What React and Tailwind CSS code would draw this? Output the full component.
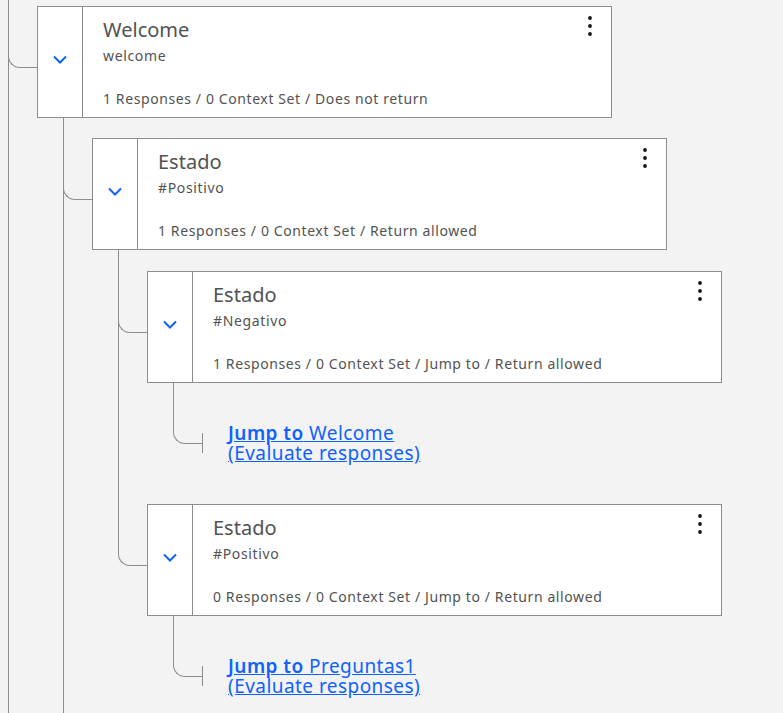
import React from 'react';

// ── Small drawings ─────────────────────────────────────────────────────────
function Chevron() {
  return (
    <svg width="14" height="9" viewBox="0 0 14 9">
      <path d="M1 1.5 L7 7.5 L13 1.5" stroke="#0f62fe" strokeWidth="2" fill="none" />
    </svg>
  );
}

function Kebab() {
  return (
    <svg width="4" height="20" viewBox="0 0 4 20">
      <circle cx="2" cy="2" r="1.9" fill="#161616" />
      <circle cx="2" cy="10" r="1.9" fill="#161616" />
      <circle cx="2" cy="18" r="1.9" fill="#161616" />
    </svg>
  );
}

// ── Dialog node card ───────────────────────────────────────────────────────
function NodeCard({ title, condition, summary }) {
  return (
    <div className="flex w-[575px] h-[112px] shrink-0 border border-[#8d8d8d] bg-white">
      <div className="w-[45px] shrink-0 border-r border-[#8d8d8d] flex items-center justify-center pb-[5px]">
        <Chevron />
      </div>
      <div className="flex-1 flex flex-col pl-[20px] pt-[10px] text-[#525252]">
        <div className="text-[20px] leading-[26px]">{title}</div>
        <div className="mt-[3px] text-[14px] leading-[20px] tracking-[0.65px]">{condition}</div>
        <div className="mt-auto mb-[8px] text-[14px] leading-[20px] tracking-[0.6px]">{summary}</div>
      </div>
      <div className="pt-[9px] pr-[19px]">
        <Kebab />
      </div>
    </div>
  );
}

// One branch of the tree: connector column + content
function Branch({ last, curve, top, children }) {
  return (
    <div className="flex">
      <div className={`w-[29px] shrink-0 ${last ? '' : 'border-l border-[#8d8d8d]'}`}>
        <div className={`${last ? '' : '-ml-px'} ${curve} border-l border-b border-[#8d8d8d] rounded-bl-[12px]`} />
      </div>
      <div className={`flex flex-col ${top}`}>{children}</div>
    </div>
  );
}

function JumpTo({ target }) {
  return (
    <div className="flex items-center">
      <div className="h-[20px] border-l border-[#8d8d8d]" />
      <a href="#" className="ml-[25px] text-[19px] leading-[20px] tracking-[0.45px] text-[#0f62fe] underline">
        <span className="font-semibold">Jump to</span> {target}
        <br />
        (Evaluate responses)
      </a>
    </div>
  );
}

export default function App() {
  return (
    <div className="h-[713px] overflow-hidden bg-[#f3f3f3] pl-[8px] font-['Noto_Sans',sans-serif]">
      <Branch curve="h-[68px]" top="pt-[6px]">
        <NodeCard
          title="Welcome"
          condition="welcome"
          summary="1 Responses / 0 Context Set / Does not return"
        />
        <div className="pl-[26px]">
          <Branch curve="h-[82px]" top="pt-[20px]">
            <NodeCard
              title="Estado"
              condition="#Positivo"
              summary="1 Responses / 0 Context Set / Return allowed"
            />
            <div className="pl-[26px]">
              <Branch curve="h-[83px]" top="pt-[21px]">
                <NodeCard
                  title="Estado"
                  condition="#Negativo"
                  summary="1 Responses / 0 Context Set / Jump to / Return allowed"
                />
                <div className="pl-[26px]">
                  <Branch last curve="h-[61px]" top="pt-[40px] pb-[20px]">
                    <JumpTo target="Welcome" />
                  </Branch>
                </div>
              </Branch>
              <Branch last curve="h-[83px]" top="pt-[21px]">
                <NodeCard
                  title="Estado"
                  condition="#Positivo"
                  summary="0 Responses / 0 Context Set / Jump to / Return allowed"
                />
                <div className="pl-[26px]">
                  <Branch last curve="h-[61px]" top="pt-[40px] pb-[60px]">
                    <JumpTo target="Preguntas1" />
                  </Branch>
                </div>
              </Branch>
            </div>
          </Branch>
        </div>
      </Branch>
    </div>
  );
}
